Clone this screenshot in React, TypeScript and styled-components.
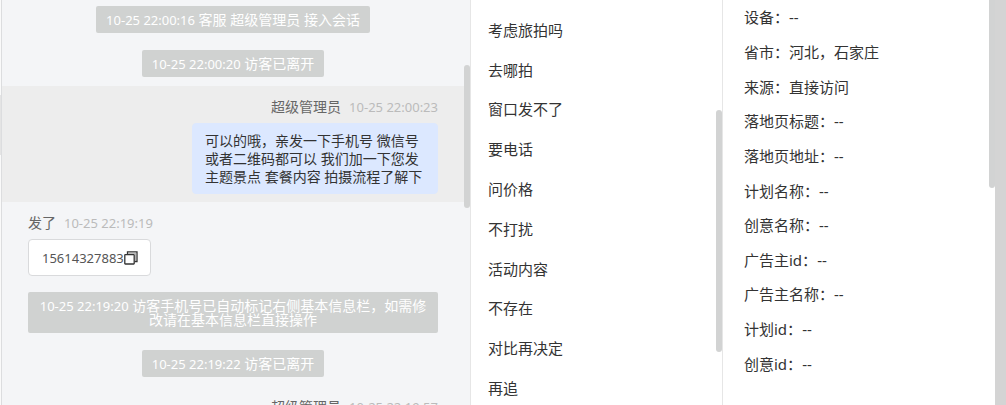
import React from "react";
import styled, { createGlobalStyle } from "styled-components";

const GlobalStyle = createGlobalStyle`
  *, *::before, *::after { box-sizing: border-box; }
  body {
    margin: 0;
    background: #fff;
    color: #333;
    font-family: "Noto Sans", "Noto Sans CJK SC", sans-serif;
    font-size: 14px;
  }
  button { font: inherit; color: inherit; border: 0; background: none; padding: 0; cursor: pointer; }
`;

const Layout = styled.main`
  display: grid;
  grid-template-columns: 470fr 253fr 272fr 11px;
  height: 100vh;
  overflow: hidden;
`;

const Thumb = styled.div<{ $top: number; $length: number }>`
  position: absolute;
  top: ${(p) => p.$top}px;
  right: 0;
  width: 6px;
  height: ${(p) => p.$length}px;
  border-radius: 3px;
  background: #d2d3d3;
`;

const ChatPanel = styled.section`
  position: relative;
  display: flex;
  min-width: 0;
  overflow: hidden;
`;

const Gutter = styled.div`
  flex: 0 0 1px;
  background: linear-gradient(#fafafa 95px, #e4e4e4 95px, #e4e4e4 155px, #fafafa 155px);
`;

const Messages = styled.div`
  flex: 1;
  min-width: 0;
  border-left: 1px solid #dcdddf;
  background: #f4f5f7;
`;

const NoticeGroup = styled.div<{ $first?: boolean }>`
  display: flex;
  flex-direction: column;
  align-items: center;
  gap: 17px;
  padding: ${(p) => (p.$first ? 6 : 8)}px 32px 9px 26px;
`;

const Notice = styled.div`
  padding: 7px 10px 6px;
  border-radius: 2px;
  background: #d0d2d1;
  color: #fff;
  line-height: 14px;
  text-align: center;
`;

const Time = styled.time`
  font-size: 13px;
`;

const Message = styled.article<{ $mine?: boolean; $active?: boolean }>`
  display: flex;
  flex-direction: column;
  align-items: ${(p) => (p.$mine ? "flex-end" : "flex-start")};
  padding: 12px 32px 8px 26px;
  background: ${(p) => (p.$active ? "#ededed" : "transparent")};
`;

const Meta = styled.header`
  display: flex;
  gap: 8px;
  height: 18px;
  line-height: 18px;
  margin-bottom: 7px;
  color: #666;

  time { color: #bbb; }
`;

const Bubble = styled.p<{ $mine?: boolean }>`
  display: flex;
  align-items: center;
  margin: 0;
  max-width: 246px;
  padding: 8px 12px 7px;
  border: 1px solid ${(p) => (p.$mine ? "#dce8ff" : "#d9dadc")};
  border-radius: 4px;
  background: ${(p) => (p.$mine ? "#dce8ff" : "#fff")};
  line-height: 18px;
`;

const Phone = styled.span`
  padding-left: 1px;
  font-size: 13px;
  line-height: 20px;
  color: #555;
`;

const CopyButton = styled.button`
  display: flex;
`;

const QuickPanel = styled.section`
  position: relative;
  border-left: 1px solid #e6e6e6;
  border-right: 1px solid #e6e6e6;
  min-width: 0;
`;

const QuickList = styled.ul`
  display: flex;
  flex-direction: column;
  height: calc(100% + 3px);
  margin: 0;
  padding: 10px 0 0 17px;
  list-style: none;
  font-size: 15px;
  line-height: 20px;

  li { flex: 1; display: flex; align-items: center; }
`;

const InfoPanel = styled.section`
  position: relative;
  min-width: 0;
`;

const InfoList = styled.dl`
  display: flex;
  flex-direction: column;
  height: 100%;
  margin: 0;
  padding: 0 16px 24px 21px;
  font-size: 15px;
  line-height: 20px;
`;

const InfoRow = styled.div`
  flex: 1;
  display: flex;
  align-items: center;

  dd { margin: 0; }
`;

const Edge = styled.div`
  background: #d4d4d4;
`;

const replies = ["考虑旅拍吗", "去哪拍", "窗口发不了", "要电话", "问价格", "不打扰", "活动内容", "不存在", "对比再决定", "再追"];

const info: [string, string][] = [
  ["设备", "--"],
  ["省市", "河北，石家庄"],
  ["来源", "直接访问"],
  ["落地页标题", "--"],
  ["落地页地址", "--"],
  ["计划名称", "--"],
  ["创意名称", "--"],
  ["广告主id", "--"],
  ["广告主名称", "--"],
  ["计划id", "--"],
  ["创意id", "--"],
];

const CopyIcon = () => (
  <svg width="14" height="14" viewBox="0 0 14 14" fill="none" aria-hidden="true">
    <path d="M3.5 3.5V0.8H13v9.7h-2.5" stroke="#333" strokeWidth="1.3" />
    <path d="M4 2.3h7.6V10" stroke="#aaa" strokeWidth="1" />
    <rect x="0.8" y="3.6" width="9.4" height="9.4" rx="0.5" fill="#fff" stroke="#333" strokeWidth="1.3" />
  </svg>
);

export default function App() {
  return (
    <>
      <GlobalStyle />
      <Layout>
        <ChatPanel>
          <Gutter />
          <Messages>
            <NoticeGroup $first>
              <Notice><Time>10-25 22:00:16</Time> 客服 超级管理员 接入会话</Notice>
              <Notice><Time>10-25 22:00:20</Time> 访客已离开</Notice>
            </NoticeGroup>
            <Message $mine $active>
              <Meta><span>超级管理员</span><Time>10-25 22:00:23</Time></Meta>
              <Bubble $mine>可以的哦，亲发一下手机号 微信号或者二维码都可以 我们加一下您发主题景点 套餐内容 拍摄流程了解下</Bubble>
            </Message>
            <Message>
              <Meta><span>发了</span><Time>10-25 22:19:19</Time></Meta>
              <Bubble>
                <Phone>15614327883</Phone>
                <CopyButton type="button" aria-label="复制"><CopyIcon /></CopyButton>
              </Bubble>
            </Message>
            <NoticeGroup>
              <Notice><Time>10-25 22:19:20</Time> 访客手机号已自动标记右侧基本信息栏，如需修改请在基本信息栏直接操作</Notice>
              <Notice><Time>10-25 22:19:22</Time> 访客已离开</Notice>
            </NoticeGroup>
            <Message $mine>
              <Meta><span>超级管理员</span><Time>10-25 22:19:57</Time></Meta>
            </Message>
          </Messages>
          <Thumb $top={65} $length={143} />
        </ChatPanel>
        <QuickPanel>
          <QuickList>
            {replies.map((text) => (
              <li key={text}><button type="button">{text}</button></li>
            ))}
          </QuickList>
          <Thumb $top={110} $length={242} />
        </QuickPanel>
        <InfoPanel>
          <InfoList>
            {info.map(([label, value]) => (
              <InfoRow key={label}><dt>{label}：</dt><dd>{value}</dd></InfoRow>
            ))}
          </InfoList>
          <Thumb $top={-12} $length={200} />
        </InfoPanel>
        <Edge />
      </Layout>
    </>
  );
}
